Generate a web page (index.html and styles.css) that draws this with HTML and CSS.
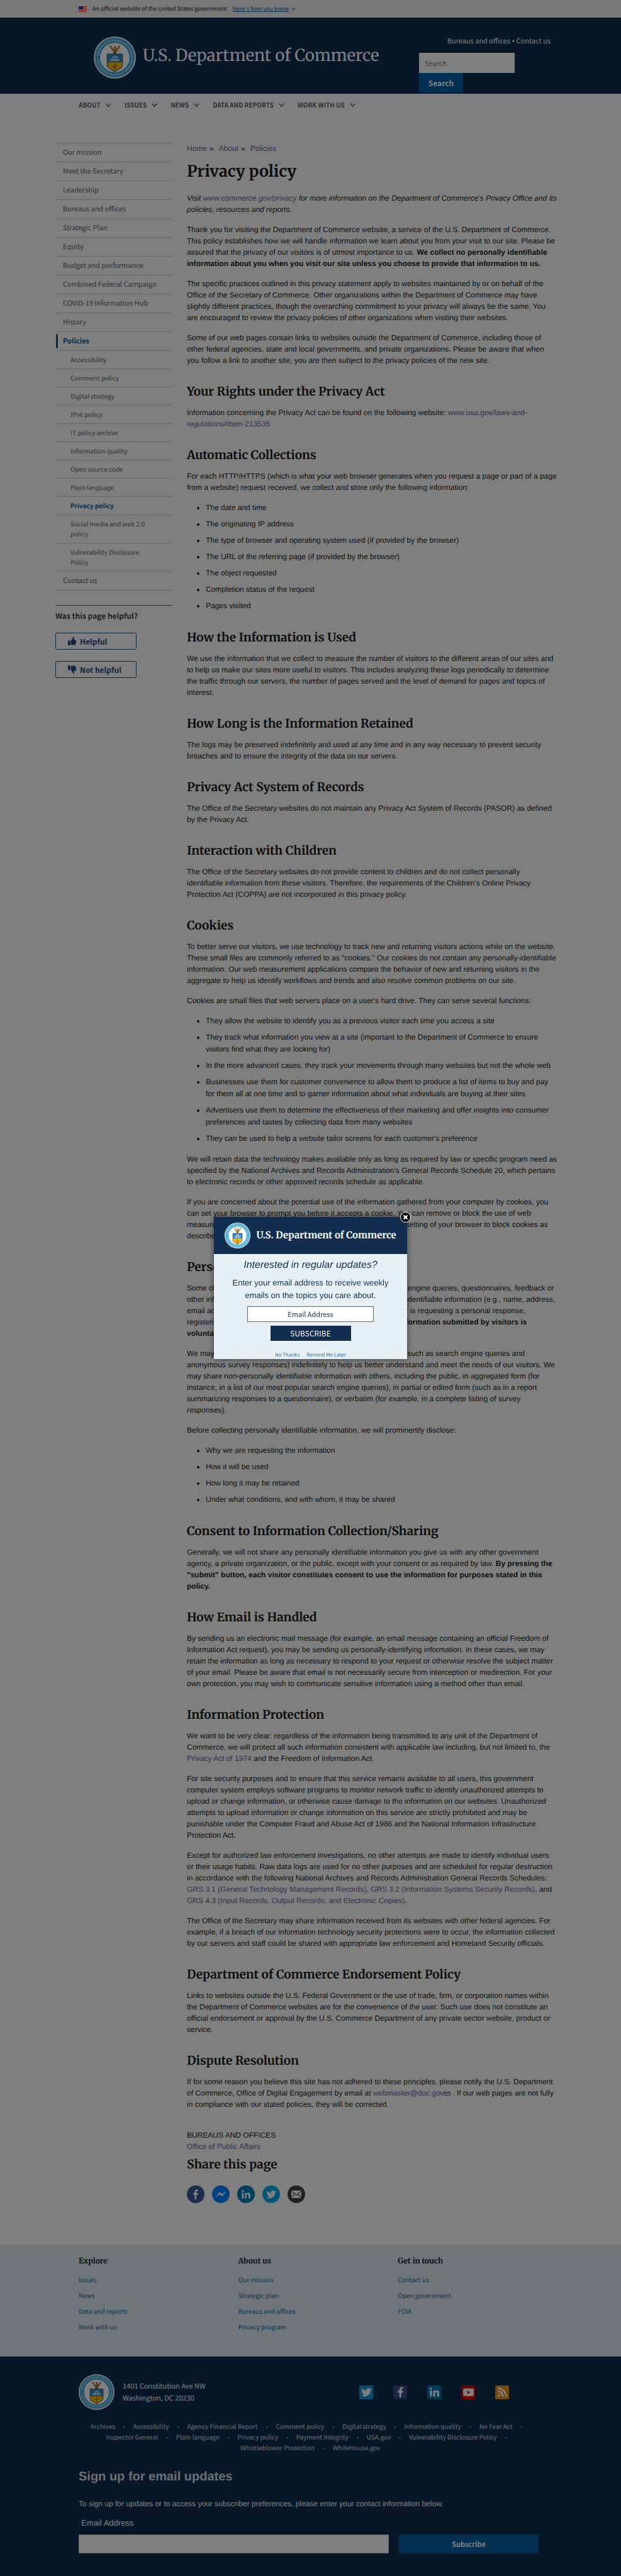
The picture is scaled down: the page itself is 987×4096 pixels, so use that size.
FILE: index.html
```html
<!DOCTYPE html>
<html lang="en">
<head>
<meta charset="utf-8">
<meta name="viewport" content="width=device-width, initial-scale=1">
<title>Privacy policy | U.S. Department of Commerce</title>
<link rel="stylesheet" href="styles.css">
</head>
<body>
<svg class="sprite" aria-hidden="true">
  <symbol id="seal" viewBox="0 0 100 100">
    <circle cx="50" cy="50" r="50" fill="#fff"/>
    <circle cx="50" cy="50" r="47.5" fill="#2f9fd8"/>
    <circle cx="50" cy="50" r="35" fill="#fff"/>
    <circle cx="50" cy="50" r="46" fill="none" stroke="#bfe3f5" stroke-width="1"/>
    <circle cx="50" cy="50" r="40.5" fill="none" stroke="#e6f5fc" stroke-width="5" stroke-dasharray="2.2 2.500"/>
    <circle cx="9.5" cy="51" r="4" fill="#2f9fd8"/><circle cx="90.5" cy="51" r="4" fill="#2f9fd8"/>
    <circle cx="9.5" cy="51" r="1.6" fill="#fff"/><circle cx="90.5" cy="51" r="1.6" fill="#fff"/>
    <path d="M50 39c-4-2-6-6-9-10-2-3-4-5-4-8 4 1 7 4 9 8l2 2 1-5-2-2 3-2c3 0 3 2 3 4l0 5 2-2c2-4 4-7 8-8 0 4-2 6-4 9-3 4-4 8-9 9z" fill="#a8752c"/>
    <path d="M45 38h10l-2 3h-6z" fill="#6b4a1d"/>
    <path d="M31 41h38v25c0 9-8 12-19 18-11-6-19-9-19-18z" fill="#3a4a55"/>
    <path d="M32.500 42.500h35V60h-35z" fill="#2f8fc8"/>
    <path d="M32.500 61h35v5c0 8-7 11-17.500 16-10.500-5-17.500-8-17.500-16z" fill="#f3b80c"/>
    <path d="M38 54h24l-3 4H41zM43 52l6-7v7zM51 52v-8l7 8z" fill="#dfeef6"/>
    <path d="M49 62h2v18h-2zM44 70h12v2H44z" fill="#8a6410"/>
  </symbol>
  <symbol id="chevron" viewBox="0 0 10 8">
    <path d="M1 1.500l4 5 4-5" fill="none" stroke="currentColor" stroke-width="1.600"/>
  </symbol>
  <symbol id="bird" viewBox="0 0 24 24">
    <path d="M23.600 5.300c-.8.400-1.700.600-2.700.800 1-.6 1.700-1.500 2-2.600-.9.500-1.900.900-3 1.100a4.700 4.700 0 0 0-8 4.300C8 8.700 4.600 6.800 2.200 4a4.700 4.700 0 0 0 1.500 6.200c-.8 0-1.500-.2-2.100-.6 0 2.300 1.600 4.200 3.800 4.700-.7.200-1.400.2-2.100.1.600 1.900 2.300 3.200 4.400 3.300A9.500 9.500 0 0 1 .7 19.600 13.300 13.300 0 0 0 21.200 7.800c.9-.7 1.700-1.500 2.400-2.500z" fill="#fff"/>
  </symbol>
  <symbol id="linkedin" viewBox="0 0 24 24">
    <path d="M2 8.500h4.500V22H2zM4.200 2a2.500 2.500 0 1 1 0 5 2.500 2.500 0 0 1 0-5zM9.300 8.500h4.200v1.900c.8-1.400 2.300-2.200 4.200-2.200 4 0 4.800 2.600 4.800 6.200V22H18v-6.700c0-1.600 0-3.400-2.100-3.400s-2.300 1.700-2.300 3.300V22H9.300z" fill="#fff"/>
  </symbol>
  <symbol id="facebook" viewBox="0 0 24 24">
    <path d="M13.800 24V13.400h3.600l.6-4.300h-4.200V6.500c0-1.200.4-2 2.100-2H18V.8A28 28 0 0 0 15 .600C11.800.600 9.500 2.500 9.500 6v3.100H6v4.300h3.500V24z" fill="#fff"/>
  </symbol>
  <symbol id="thumb" viewBox="0 0 16 16">
    <path d="M1 7h4v8H1zM6 7l3.500-4.500V.800c2 0 2.800 1.400 2 3.200L11 6h3.500c1 .4 1 1.700.3 2.200.6.7.4 1.700-.4 2.100.5.800.1 1.600-.6 1.900.3 1.300-.4 2.300-1.800 2.300H9c-1.500 0-2-.5-3-1z" fill="#1a4f86"/>
  </symbol>
</svg>

<div class="gov-banner">
  <svg class="flag" viewBox="0 0 13 9" aria-hidden="true"><path d="M0 0h13v9H0z" fill="#fff"/><path d="M0 .500h13M0 2.500h13M0 4.500h13M0 6.500h13M0 8.500h13" stroke="#db3e1f" stroke-width="1.200"/><path d="M0 0h7v5H0z" fill="#1e33b1"/></svg>
  <span>An official website of the United States government</span>
  <button type="button" class="banner-toggle"><span>Here's how you know</span><svg aria-hidden="true"><use href="#chevron"/></svg></button>
</div>

<header class="site-header">
  <a class="brand" href="#"><svg class="seal-lg" aria-hidden="true"><use href="#seal"/></svg><span>U.S. Department of Commerce</span></a>
  <div class="header-tools">
    <div class="quick-links"><a href="#">Bureaus and offices</a><span class="dot">•</span><a href="#">Contact us</a></div>
    <form class="search" role="search">
      <input type="search" placeholder="Search" aria-label="Search">
      <button type="button">Search</button>
    </form>
  </div>
</header>

<nav class="main-nav" aria-label="Primary">
  <button type="button">About<svg aria-hidden="true"><use href="#chevron"/></svg></button>
  <button type="button">Issues<svg aria-hidden="true"><use href="#chevron"/></svg></button>
  <button type="button">News<svg aria-hidden="true"><use href="#chevron"/></svg></button>
  <button type="button">Data and reports<svg aria-hidden="true"><use href="#chevron"/></svg></button>
  <button type="button">Work with us<svg aria-hidden="true"><use href="#chevron"/></svg></button>
</nav>

<div class="page">
  <aside class="sidebar">
    <ul class="sidenav">
      <li><a href="#">Our mission</a></li>
      <li><a href="#">Meet the Secretary</a></li>
      <li><a href="#">Leadership</a></li>
      <li><a href="#">Bureaus and offices</a></li>
      <li><a href="#">Strategic Plan</a></li>
      <li><a href="#">Equity</a></li>
      <li><a href="#">Budget and performance</a></li>
      <li><a href="#">Combined Federal Campaign</a></li>
      <li><a href="#">COVID-19 Information Hub</a></li>
      <li><a href="#">History</a></li>
      <li><a class="current" href="#">Policies</a>
        <ul class="subnav">
          <li><a href="#">Accessibility</a></li>
          <li><a href="#">Comment policy</a></li>
          <li><a href="#">Digital strategy</a></li>
          <li><a href="#">IPv6 policy</a></li>
          <li><a href="#">IT policy archive</a></li>
          <li><a href="#">Information quality</a></li>
          <li><a href="#">Open source code</a></li>
          <li><a href="#">Plain language</a></li>
          <li><a class="here" href="#">Privacy policy</a></li>
          <li><a href="#">Social media and web 2.0 policy</a></li>
          <li><a href="#">Vulnerability Disclosure Policy</a></li>
        </ul>
      </li>
      <li><a href="#">Contact us</a></li>
    </ul>
    <section class="feedback">
      <h2>Was this page helpful?</h2>
      <button type="button"><svg aria-hidden="true"><use href="#thumb"/></svg>Helpful</button>
      <button type="button"><svg class="down" aria-hidden="true"><use href="#thumb"/></svg>Not helpful</button>
    </section>
  </aside>

  <main class="content">
    <nav class="crumbs" aria-label="Breadcrumb"><a href="#">Home</a><span>»</span><a href="#">About</a><span>»</span><a href="#">Policies</a></nav>
    <h1>Privacy policy</h1>
    <p><em>Visit <a href="#">www.commerce.gov/privacy</a> for more information on the Department of Commerce's Privacy Office and its policies, resources and reports.</em></p>
    <p>Thank you for visiting the Department of Commerce website, a service of the U.S. Department of Commerce. This policy establishes how we will handle information we learn about you from your visit to our site. Please be assured that the privacy of our visitors is of utmost importance to us. <strong>We collect no personally identifiable information about you when you visit our site unless you choose to provide that information to us.</strong></p>
    <p>The specific practices outlined in this privacy statement apply to websites maintained by or on behalf of the Office of the Secretary of Commerce. Other organizations within the Department of Commerce may have slightly different practices, though the overarching commitment to your privacy will always be the same. You are encouraged to review the privacy policies of other organizations when visiting their websites.</p>
    <p>Some of our web pages contain links to websites outside the Department of Commerce, including those of other federal agencies, state and local governments, and private organizations. Please be aware that when you follow a link to another site, you are then subject to the privacy policies of the new site.</p>

    <h2>Your Rights under the Privacy Act</h2>
    <p>Information concerning the Privacy Act can be found on the following website: <a href="#">www.usa.gov/laws-and-regulations#item-213535</a></p>

    <h2>Automatic Collections</h2>
    <p>For each HTTP/HTTPS (which is what your web browser generates when you request a page or part of a page from a website) request received, we collect and store only the following information:</p>
    <ul>
      <li>The date and time</li>
      <li>The originating IP address</li>
      <li>The type of browser and operating system used (if provided by the browser)</li>
      <li>The URL of the referring page (if provided by the browser)</li>
      <li>The object requested</li>
      <li>Completion status of the request</li>
      <li>Pages visited</li>
    </ul>

    <h2>How the Information is Used</h2>
    <p>We use the information that we collect to measure the number of visitors to the different areas of our sites and to help us make our sites more useful to visitors. This includes analyzing these logs periodically to determine the traffic through our servers, the number of pages served and the level of demand for pages and topics of interest.</p>

    <h2>How Long is the Information Retained</h2>
    <p>The logs may be preserved indefinitely and used at any time and in any way necessary to prevent security breaches and to ensure the integrity of the data on our servers.</p>

    <h2>Privacy Act System of Records</h2>
    <p>The Office of the Secretary websites do not maintain any Privacy Act System of Records (PASOR) as defined by the Privacy Act.</p>

    <h2>Interaction with Children</h2>
    <p>The Office of the Secretary websites do not provide content to children and do not collect personally identifiable information from these visitors. Therefore, the requirements of the Children's Online Privacy Protection Act (COPPA) are not incorporated in this privacy policy.</p>

    <h2>Cookies</h2>
    <p>To better serve our visitors, we use technology to track new and returning visitors actions while on the website. These small files are commonly referred to as "cookies." Our cookies do not contain any personally-identifiable information. Our web measurement applications compare the behavior of new and returning visitors in the aggregate to help us identify workflows and trends and also resolve common problems on our site.</p>
    <p>Cookies are small files that web servers place on a user's hard drive. They can serve several functions:</p>
    <ul>
      <li>They allow the website to identify you as a previous visitor each time you access a site</li>
      <li>They track what information you view at a site (important to the Department of Commerce to ensure visitors find what they are looking for)</li>
      <li>In the more advanced cases, they track your movements through many websites but not the whole web</li>
      <li>Businesses use them for customer convenience to allow them to produce a list of items to buy and pay for them all at one time and to garner information about what individuals are buying at their sites</li>
      <li>Advertisers use them to determine the effectiveness of their marketing and offer insights into consumer preferences and tastes by collecting data from many websites</li>
      <li>They can be used to help a website tailor screens for each customer's preference</li>
    </ul>
    <p>We will retain data the technology makes available only as long as required by law or specific program need as specified by the National Archives and Records Administration's General Records Schedule 20, which pertains to electronic records or other approved records schedule as applicable.</p>
    <p>If you are concerned about the potential use of the information gathered from your computer by cookies, you can set your browser to prompt you before it accepts a cookie. You can remove or block the use of web measurement technologies on all our websites by changing each setting of your browser to block cookies as described.</p>

    <h2>Personally Provided Information</h2>
    <p>Some of our web pages contain interactive forms, such as search engine queries, questionnaires, feedback or other information requests. We may also ask users for personally identifiable information (e.g., name, address, email address, phone number, etc.) only in cases where the visitor is requesting a personal response, registering for conferences, and subscribing to mailing lists. <strong>All information submitted by visitors is voluntary.</strong></p>
    <p>We may collect and retain non-personally identifiable information (such as search engine queries and anonymous survey responses) indefinitely to help us better understand and meet the needs of our visitors. We may share non-personally identifiable information with others, including the public, in aggregated form (for instance, in a list of our most popular search engine queries), in partial or edited form (such as in a report summarizing responses to a questionnaire), or verbatim (for example, in a complete listing of survey responses).</p>
    <p>Before collecting personally identifiable information, we will prominently disclose:</p>
    <ul>
      <li>Why we are requesting the information</li>
      <li>How it will be used</li>
      <li>How long it may be retained</li>
      <li>Under what conditions, and with whom, it may be shared</li>
    </ul>

    <h2>Consent to Information Collection/Sharing</h2>
    <p>Generally, we will not share any personally identifiable information you give us with any other government agency, a private organization, or the public, except with your consent or as required by law. <strong>By pressing the "submit" button, each visitor constitutes consent to use the information for purposes stated in this policy.</strong></p>

    <h2>How Email is Handled</h2>
    <p>By sending us an electronic mail message (for example, an email message containing an official Freedom of Information Act request), you may be sending us personally-identifying information. In these cases, we may retain the information as long as necessary to respond to your request or otherwise resolve the subject matter of your email. Please be aware that email is not necessarily secure from interception or misdirection. For your own protection, you may wish to communicate sensitive information using a method other than email.</p>

    <h2>Information Protection</h2>
    <p>We want to be very clear: regardless of the information being transmitted to any unit of the Department of Commerce, we will protect all such information consistent with applicable law including, but not limited to, the <a href="#">Privacy Act of 1974</a> and the Freedom of Information Act.</p>
    <p>For site security purposes and to ensure that this service remains available to all users, this government computer system employs software programs to monitor network traffic to identify unauthorized attempts to upload or change information, or otherwise cause damage to the information on our websites. Unauthorized attempts to upload information or change information on this service are strictly prohibited and may be punishable under the Computer Fraud and Abuse Act of 1986 and the National Information Infrastructure Protection Act.</p>
    <p>Except for authorized law enforcement investigations, no other attempts are made to identify individual users or their usage habits. Raw data logs are used for no other purposes and are scheduled for regular destruction in accordance with the following National Archives and Records Administration General Records Schedules: <a href="#">GRS 3.1 (General Technology Management Records)</a>, <a href="#">GRS 3.2 (Information Systems Security Records)</a>, and <a href="#">GRS 4.3 (Input Records, Output Records, and Electronic Copies)</a>.</p>
    <p>The Office of the Secretary may share information received from its websites with other federal agencies. For example, if a breach of our information technology security protections were to occur, the information collected by our servers and staff could be shared with appropriate law enforcement and Homeland Security officials.</p>

    <h2>Department of Commerce Endorsement Policy</h2>
    <p>Links to websites outside the U.S. Federal Government or the use of trade, firm, or corporation names within the Department of Commerce websites are for the convenience of the user. Such use does not constitute an official endorsement or approval by the U.S. Commerce Department of any private sector website, product or service.</p>

    <h2>Dispute Resolution</h2>
    <p>If for some reason you believe this site has not adhered to these principles, please notify the U.S. Department of Commerce, Office of Digital Engagement by email at <a href="#">webmaster@doc.gov<svg class="mailto" viewBox="0 0 10 6" aria-hidden="true"><path d="M.500.500h9v5h-9zM.500.500L5 3.500 9.500.500" fill="none" stroke="#54488c"/></svg></a> . If our web pages are not fully in compliance with our stated policies, they will be corrected.</p>

    <div class="tags"><div>BUREAUS AND OFFICES</div><a href="#">Office of Public Affairs</a></div>
    <h2 class="share-title">Share this page</h2>
    <div class="share">
      <a href="#" class="fb" aria-label="Facebook"><svg viewBox="0 0 24 24"><use href="#facebook"/></svg></a>
      <a href="#" class="ms" aria-label="Messenger"><svg viewBox="0 0 24 24"><path d="M0 18.500L9 6.500l5.500 5L24 5.500l-9 12-5.500-5z" fill="#fff"/></svg></a>
      <a href="#" class="li" aria-label="LinkedIn"><svg viewBox="0 0 24 24"><use href="#linkedin"/></svg></a>
      <a href="#" class="tw" aria-label="Twitter"><svg viewBox="0 0 24 24"><use href="#bird"/></svg></a>
      <a href="#" class="em" aria-label="Email"><svg viewBox="0 0 24 24"><path d="M0 3h24v18H0z" fill="#fff"/><path d="M0 4l12 10L24 4M0 20l8.500-8.500M24 20l-8.500-8.500" fill="none" stroke="#444" stroke-width="1.800"/></svg></a>
    </div>
  </main>
</div>

<footer>
  <div class="footer-links">
    <section><h3>Explore</h3><ul><li><a href="#">Issues</a></li><li><a href="#">News</a></li><li><a href="#">Data and reports</a></li><li><a href="#">Work with us</a></li></ul></section>
    <section><h3>About us</h3><ul><li><a href="#">Our mission</a></li><li><a href="#">Strategic plan</a></li><li><a href="#">Bureaus and offices</a></li><li><a href="#">Privacy program</a></li></ul></section>
    <section><h3>Get in touch</h3><ul><li><a href="#">Contact us</a></li><li><a href="#">Open government</a></li><li><a href="#">FOIA</a></li></ul></section>
  </div>
  <div class="footer-main">
    <div class="footer-top">
      <svg class="seal-md" aria-hidden="true"><use href="#seal"/></svg>
      <address>1401 Constitution Ave NW<br>Washington, DC 20230</address>
      <div class="social">
        <a href="#" class="tw" aria-label="Twitter"><svg viewBox="0 0 24 24"><use href="#bird"/></svg></a>
        <a href="#" class="fb" aria-label="Facebook"><svg viewBox="0 0 24 24"><use href="#facebook"/></svg></a>
        <a href="#" class="li" aria-label="LinkedIn"><svg viewBox="0 0 24 24"><use href="#linkedin"/></svg></a>
        <a href="#" class="yt" aria-label="YouTube"><svg viewBox="0 0 24 24"><rect x="0" y="4" width="24" height="17" rx="4" fill="#fff"/><path d="M9.500 8.500v8l6.500-4z" fill="#d00"/></svg></a>
        <a href="#" class="rs" aria-label="RSS"><svg viewBox="0 0 24 24"><circle cx="4.500" cy="19.500" r="3" fill="#fff"/><path d="M1.500 10.500a12 12 0 0 1 12 12M1.500 3.500a19 19 0 0 1 19 19" fill="none" stroke="#fff" stroke-width="4"/></svg></a>
      </div>
    </div>
    <ul class="legal">
      <li><a href="#">Archives</a></li>
      <li><a href="#">Accessibility</a></li>
      <li><a href="#">Agency Financial Report</a></li>
      <li><a href="#">Comment policy</a></li>
      <li><a href="#">Digital strategy</a></li>
      <li><a href="#">Information quality</a></li>
      <li><a href="#">No Fear Act</a></li>
      <li><a href="#">Inspector General</a></li>
      <li><a href="#">Plain language</a></li>
      <li><a href="#">Privacy policy</a></li>
      <li><a href="#">Payment Integrity</a></li>
      <li><a href="#">USA.gov</a></li>
      <li><a href="#">Vulnerability Disclosure Policy</a></li>
      <li><a href="#">Whistleblower Protection</a></li>
      <li><a href="#">WhiteHouse.gov</a></li>
    </ul>
    <form class="signup">
      <h2>Sign up for email updates</h2>
      <p>To sign up for updates or to access your subscriber preferences, please enter your contact information below.</p>
      <label for="signup-email"><span class="req">*</span>Email Address</label>
      <div class="signup-row"><input id="signup-email" type="email"><button type="button">Subscribe</button></div>
    </form>
  </div>
</footer>

<div class="overlay">
  <div class="modal" role="dialog" aria-label="Email updates">
    <button type="button" class="close" aria-label="Close"><svg viewBox="0 0 16 16"><path d="M5 5l6 6M11 5l-6 6" stroke="#fff" stroke-width="2.600"/></svg></button>
    <div class="modal-head"><svg class="seal-sm" aria-hidden="true"><use href="#seal"/></svg><strong>U.S. Department of Commerce</strong></div>
    <form class="modal-body">
      <h2>Interested in regular updates?</h2>
      <p>Enter your email address to receive weekly emails on the topics you care about.</p>
      <input type="email" placeholder="Email Address" aria-label="Email Address">
      <button type="button">SUBSCRIBE</button>
      <div class="dismiss"><a href="#">No Thanks</a><a href="#">Remind Me Later</a></div>
    </form>
  </div>
</div>
</body>
</html>
```

FILE: styles.css
```css
:root {
  --navy: #112e51;
  --blue: #005ea2;
  --purple: #6a5ca4;
  --rule: #cfd1d4;
  --sans: "Source Sans Pro", "Noto Sans CJK SC", sans-serif;
  --body: "Liberation Sans", Arial, sans-serif;
  --serif: Merriweather, "Liberation Serif", serif;
}

* { box-sizing: border-box; }

body {
  margin: 0;
  background: #fff;
  color: #1b1b1b;
  font: 12px/18px var(--body);
  text-rendering: geometricPrecision;
}

a { color: var(--purple); text-decoration: none; }
button, input { font-family: var(--sans); margin: 0; }
ul { margin: 0; padding: 0; list-style: none; }
.sprite { position: absolute; width: 0; height: 0; }

/* Government banner */
.gov-banner {
  display: flex;
  align-items: center;
  gap: 9px;
  height: 28px;
  padding: 0 125px;
  background: #f0f0f0;
  font: 9px/16px var(--sans);
}
.flag { width: 13px; height: 9px; }
.banner-toggle {
  display: flex;
  align-items: center;
  gap: 4px;
  padding: 0;
  border: 0;
  background: none;
  color: var(--blue);
  font-size: 9px;
  line-height: 12px;
}
.banner-toggle span { text-decoration: underline; }
.banner-toggle svg { width: 7px; height: 5px; color: #1b1b1b; }

/* Header */
.site-header {
  display: flex;
  justify-content: space-between;
  height: 121px;
  padding: 0 112px 0 149px;
  background: var(--navy);
}
.brand {
  display: flex;
  align-items: center;
  gap: 11px;
  padding-top: 5px;
  color: #fff;
  font: 26px/36px var(--serif);
}
.brand span { padding-bottom: 4px; }
.seal-lg { width: 67px; height: 67px; }
.header-tools { width: 209px; padding-top: 27px; }
.quick-links {
  margin-bottom: 8px;
  color: #fff;
  font: 11px/20px var(--sans);
  text-align: right;
}
.quick-links a { color: #fff; }
.dot { margin: 0 3px; font-family: var(--body); }
.search { display: flex; flex-direction: column; align-items: flex-start; }
.search input {
  width: 152px;
  height: 32px;
  padding: 0 8px;
  border: 1px solid #fff;
  border-radius: 0;
  font-size: 11px;
}
.search button {
  width: 70px;
  height: 31px;
  border: 0;
  border-radius: 0 3px 3px 0;
  background: var(--blue);
  color: #fff;
  font-size: 12px;
  font-weight: 700;
}

/* Primary navigation */
.main-nav { display: flex; gap: 21px; padding: 8px 125px; }
.main-nav button {
  display: flex;
  align-items: center;
  gap: 8px;
  padding: 0;
  border: 0;
  background: none;
  color: #5b616b;
  font-size: 10px;
  font-weight: 700;
  line-height: 20px;
  text-transform: uppercase;
}
.main-nav svg { width: 9px; height: 8px; }

/* Page grid */
.page {
  display: grid;
  grid-template-columns: 186px minmax(0, 1fr);
  gap: 23px;
  padding: 42px 101px 0 88px;
}

/* Sidebar */
.sidenav { border-top: 1px solid var(--rule); font: 11px/17px var(--sans); }
.sidenav a {
  display: block;
  padding: 6px 12px;
  border-bottom: 1px solid var(--rule);
  color: #5b616b;
}
.sidenav .current { position: relative; color: var(--blue); font-weight: 700; }
.sidenav .current::before {
  content: "";
  position: absolute;
  left: 1px;
  top: 3px;
  bottom: 3px;
  width: 3px;
  border-radius: 3px;
  background: var(--blue);
}
.subnav { font-size: 10px; line-height: 16px; }
.subnav a { padding: 6px 24px; }
.subnav .here { color: var(--blue); font-weight: 700; }
.feedback {
  display: flex;
  flex-direction: column;
  align-items: flex-start;
  margin-top: 23px;
  border-top: 1px solid #5b616b;
}
.feedback h2 { margin: 7px 0 16px; color: #3d4551; font: 700 12px/20px var(--sans); }
.feedback button {
  display: flex;
  align-items: center;
  gap: 5px;
  width: 129px;
  height: 27px;
  margin-bottom: 18px;
  padding: 0 18px;
  border: 1px solid #1a4f86;
  border-radius: 3px;
  background: #fff;
  color: #1a4f86;
  font-size: 12px;
  font-weight: 700;
}
.feedback svg { width: 15px; height: 15px; }
.feedback .down { transform: rotate(180deg) scaleX(-1); }

/* Article */
.crumbs { margin-bottom: 11px; }
.crumbs span { margin: 0 8px 0 4px; }
h1 { margin: 0 0 18px; font: 700 25px/32px var(--serif); }
.content h2 { margin: 29px 0 12px; font: 700 19px/24px var(--serif); }
.content p { margin: 0 0 14px; }
.content ul { margin: 0 0 14px; padding-left: 30px; list-style: disc; }
.content li { margin-bottom: 7px; line-height: 19px; }
.mailto { width: 10px; height: 6px; }
.tags { margin-top: 31px; }
.content .share-title { margin: 8px 0 21px; }
.share { display: flex; gap: 12px; }
.share a, .social a { display: flex; align-items: center; justify-content: center; }
.share a { width: 28px; height: 28px; border-radius: 50%; }
.share svg { width: 16px; height: 16px; }
.share .fb { background: #3b5998; }
.share .ms { background: #0084ff; }
.share .li { background: #007bb5; }
.share .tw { background: #00aced; }
.share .em { background: #444; }

/* Footer link columns */
.footer-links {
  display: grid;
  grid-template-columns: repeat(3, 1fr);
  margin-top: 67px;
  padding: 17px 101px 30px 125px;
  background: #dfebf3;
}
.footer-links h3 { margin: 0 0 12px; font: 700 12px/18px var(--serif); }
.footer-links li { margin-bottom: 9px; font: 10px/16px var(--sans); }
.footer-links a { color: #046b99; }

/* Footer */
.footer-main { padding: 28px 125px 41px; background: var(--navy); color: #fff; }
.footer-top { display: flex; align-items: center; }
.seal-md { width: 57px; height: 57px; }
.footer-main address { margin-left: 13px; font: 11px/19px var(--sans); }
.social { display: flex; gap: 32px; margin-left: auto; padding-right: 53px; }
.social a { width: 22px; height: 22px; border-radius: 2px; }
.social svg { width: 17px; height: 17px; }
.social .tw { background: #1b95e0; }
.social .fb { background: #3b4a8c; }
.social .li { background: #0077b5; }
.social .yt { background: #d00; }
.social .rs { background: #e8920c; }
.legal {
  display: flex;
  flex-wrap: wrap;
  justify-content: center;
  margin-top: 17px;
  font: 10px/17px var(--sans);
}
.legal li:not(:last-child)::after {
  content: "•";
  margin: 0 13px;
  color: #aeb4bc;
  font: 8px/0 var(--body);
}
.legal a { color: #dcdee0; }
.signup { padding-right: 6px; }
.signup h2 { margin: 23px 0 19px; color: #dcdee0; font: 700 20px/30px var(--body); }
.signup p { margin: 0 0 13px; }
.signup label { display: block; margin-bottom: 8px; font-size: 13px; }
.req { color: #e31c3d; font-size: 11px; }
.signup-row { display: flex; gap: 16px; }
.signup-row input { flex: 1; min-width: 0; height: 30px; border: 1px solid #ccc; }
.signup-row button {
  width: 222px;
  border: 0;
  border-radius: 3px;
  background: var(--blue);
  color: #fff;
  font-size: 11px;
  font-weight: 700;
}

/* Subscription dialog */
.overlay {
  position: fixed;
  inset: 0;
  display: flex;
  align-items: center;
  justify-content: center;
  background: rgba(0, 0, 0, .5);
}
.modal {
  position: relative;
  width: 307px;
  height: 226px;
  background: #e7f0f6;
  box-shadow: 0 0 8px rgba(0, 0, 0, .6);
}
.close {
  position: absolute;
  top: -8px;
  right: -6px;
  width: 17px;
  height: 17px;
  padding: 0;
  border: 1px solid #fff;
  border-radius: 50%;
  background: #000;
}
.close svg { display: block; width: 15px; height: 15px; }
.modal-head {
  display: flex;
  align-items: center;
  justify-content: center;
  gap: 9px;
  height: 59px;
  background: var(--navy);
  color: #fff;
  font: 15px/24px var(--serif);
}
.seal-sm { width: 41px; height: 41px; }
.modal-body {
  display: flex;
  flex-direction: column;
  align-items: center;
  height: 167px;
  overflow: hidden;
  color: var(--navy);
}
.modal-body h2 { margin: 7px 0 7px; font: italic 16px/22px var(--body); }
.modal-body p { width: 264px; margin: 0 0 7px; font-size: 13px; line-height: 20px; text-align: center; }
.modal-body input {
  width: 201px;
  height: 27px;
  padding: 0;
  border: 1px solid #3a6ba5;
  text-align: center;
  font-size: 11px;
}
.modal-body input::placeholder { color: var(--navy); }
.modal-body button {
  width: 128px;
  height: 26px;
  margin-top: 6px;
  border: 0;
  background: var(--navy);
  color: #fff;
  font-size: 12px;
}
.dismiss { display: flex; gap: 11px; margin-top: 17px; font: 8px/12px var(--sans); }
.dismiss a { color: #2a6db0; }
```
